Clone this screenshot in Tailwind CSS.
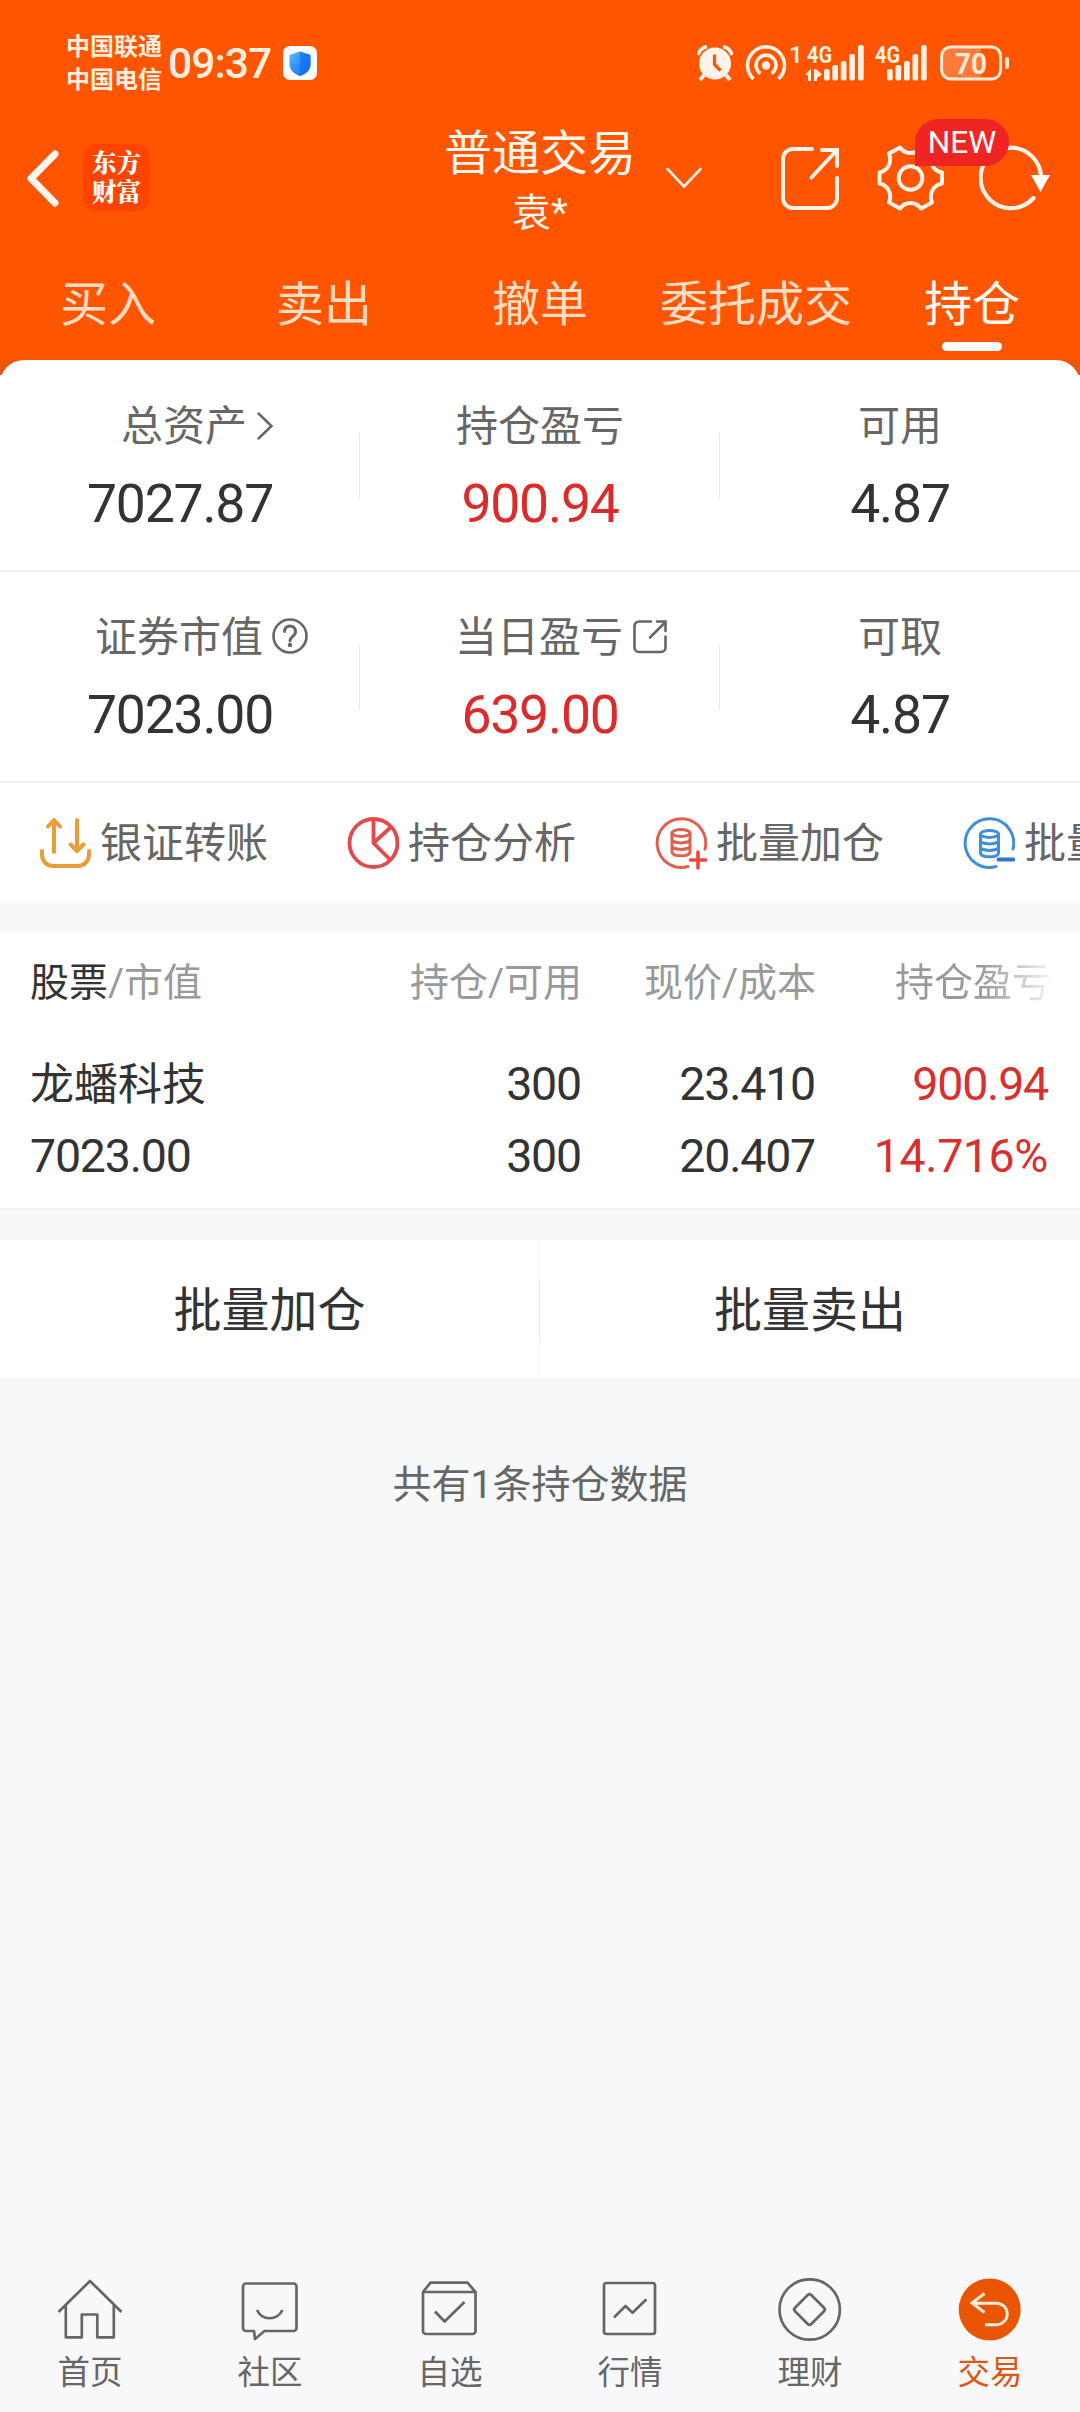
<!DOCTYPE html>
<html lang="zh-CN">
<head>
<meta charset="utf-8">
<title>普通交易</title>
<script src="https://cdn.jsdelivr.net/npm/@tailwindcss/browser@4"></script>
</head>
<body class="bg-[#f7f8fa]">
<div class="w-[1080px] h-[2412px] flex flex-col overflow-hidden bg-[#f7f8fa] font-['Roboto','Noto_Sans_CJK_SC',sans-serif] text-[#333] whitespace-nowrap">

  <header class="h-[360px] shrink-0 bg-[#ff5500] text-[#fff6ec] flex flex-col">
    <!-- status bar -->
    <div class="h-[112px] pt-[16px] pl-[66px] pr-[70px] flex items-center">
      <div class="flex flex-col text-[24px] leading-[33px] font-bold text-[#ffeedd]">
        <span>中国联通</span><span>中国电信</span>
      </div>
      <div class="ml-[6px] text-[42.5px] leading-[48px] font-medium tracking-[-0.9px] text-[#ffeedd]">09:37</div>
      <svg class="ml-[12px] -mt-[2px]" width="34" height="34" viewBox="0 0 34 34"><defs><linearGradient id="sh" x1="0" y1="0" x2="1" y2="1"><stop offset="0" stop-color="#5cb8ff"/><stop offset="1" stop-color="#0a63f0"/></linearGradient></defs><rect width="34" height="34" rx="7" fill="#fff"/><path d="M17 5.5 27.5 9v9.500c0 6-5 9.500-10.500 11.500C11.500 28 6.500 24.500 6.500 18.500V9Z" fill="url(#sh)"/><path d="M17 5.500 27.500 9v9.500c0 6-5 9.500-10.500 11.500Z" fill="#0a6cf5" opacity=".6"/></svg>
      <div class="flex-1"></div>
      <svg class="-mt-[2px]" width="36" height="36" viewBox="0 0 36 36" fill="#fff3ea"><circle cx="18" cy="18.500" r="16"/><path d="M1 10A12 12 0 0 1 10 1.500M26 1.500A12 12 0 0 1 35 10" fill="none" stroke="#fff3ea" stroke-width="3.500"/><path d="M7 30l-4 5M29 30l4 5" stroke="#fff3ea" stroke-width="4"/><path d="M17.500 9.500v10l6 6" fill="none" stroke="#ff5500" stroke-width="3.200"/></svg>
      <svg class="ml-[12px] -mt-[2px]" width="42" height="36" viewBox="0 0 42 36" fill="none" stroke="#fff0e2" stroke-width="3.600"><circle cx="21" cy="20.500" r="4.200" fill="#fff0e2" stroke="none"/><path d="M15.500 28.500a10 10 0 1 1 11 0"/><path d="M8.500 34a18.500 18.500 0 1 1 25 0"/></svg>
      <svg class="ml-[3px] -mt-[2px] overflow-visible" width="75" height="36" viewBox="0 0 75 36" fill="#fff0e2"><text x="-1" y="18" font-size="24" font-weight="600">1</text><text x="17" y="18" font-size="24.500" font-weight="700" textLength="25" lengthAdjust="spacingAndGlyphs">4G</text><path d="M15 29.500 21 24v12h-3v-5.500ZM32 29.500 26 24h-2v12h3v-3Z"/><rect x="34" y="24" width="5.700" height="11.500" rx="2"/><rect x="42.300" y="20" width="5.700" height="15.500" rx="2"/><rect x="50.800" y="16" width="5.700" height="19.500" rx="2"/><rect x="59.200" y="9" width="5.700" height="26.500" rx="2"/><rect x="68" y="0" width="5.700" height="35.500" rx="2"/></svg>
      <svg class="ml-[10px] -mt-[2px] overflow-visible" width="53" height="36" viewBox="0 0 53 36" fill="#fff0e2"><text x="0" y="18" font-size="24.500" font-weight="700" textLength="25" lengthAdjust="spacingAndGlyphs">4G</text><rect x="12" y="24" width="5.700" height="11.500" rx="2"/><rect x="20.500" y="20" width="5.700" height="15.500" rx="2"/><rect x="29" y="16" width="5.700" height="19.500" rx="2"/><rect x="37.500" y="9" width="5.700" height="26.500" rx="2"/><rect x="46" y="0" width="5.700" height="35.500" rx="2"/></svg>
      <svg class="ml-[12px] -mt-[2px] overflow-visible" width="70" height="36" viewBox="0 0 70 36"><path d="M10 3H41V33H10a7 7 0 0 1-7-7V10a7 7 0 0 1 7-7" fill="#ff7a38"/><rect x="1.600" y="2" width="59" height="32" rx="9" fill="none" stroke="#ffead6" stroke-width="3"/><rect x="65" y="12" width="4" height="12" rx="2" fill="#ffead6"/><text x="31" y="28.500" text-anchor="middle" font-size="30" font-weight="700" textLength="32" lengthAdjust="spacingAndGlyphs" fill="#ffead6">70</text></svg>
    </div>

    <!-- title bar -->
    <div class="h-[133px] flex items-start">
      <div class="w-[360px] flex items-center pt-[32px] pl-[26px]">
        <svg width="34" height="66" viewBox="0 0 34 66" fill="none" stroke="#fff8f0" stroke-width="7" stroke-linecap="round" stroke-linejoin="round"><path d="M29 9 5 33.500 29 58"/></svg>
        <div class="ml-[23px] w-[67px] h-[67px] rounded-[13px] bg-[#ff4400] text-white text-[24.500px] leading-[29px] font-black flex flex-col items-center justify-center pb-[3px] font-['Noto_Serif_CJK_SC','Noto_Sans_CJK_SC',serif]"><span>东方</span><span>财富</span></div>
      </div>
      <div class="relative w-[360px] flex flex-col items-center">
        <div class="mt-[13px] text-[48px] leading-[58px]">普通交易</div>
        <div class="mt-[3px] text-[39px] leading-[54px]">袁*</div>
        <svg class="absolute left-[305px] top-[54px]" width="38" height="24" viewBox="0 0 38 24" fill="none" stroke="#fff3ea" stroke-width="2.600" stroke-linecap="round"><path d="M2.500 3 19 20.500 35.500 3"/></svg>
      </div>
      <div class="relative w-[360px] flex items-center pt-[32px] pl-[60px]">
        <svg width="60" height="68" viewBox="0 0 60 68" fill="none" stroke="#fff3ea" stroke-width="4" stroke-linecap="round"><path d="M32 5H13a10 10 0 0 0-10 10V54a10 10 0 0 0 10 10H47a10 10 0 0 0 10-10V34"/><path d="M31.500 33.500 56 7M42 6H57V22"/></svg>
        <svg class="ml-[37px]" width="68" height="68" viewBox="0 0 68 68" fill="none" stroke="#fff3ea" stroke-width="4" stroke-linejoin="round"><path d="M23 3.500Q27 9 33.500 9T44 3.500L55 9.500C52 17 55 26.500 65 28.500V39.500C55 41.500 52 51 55 58.500L44 64.500Q40 59 33.500 59T23 64.500L12 58.500C15 51 12 41.500 2.500 39.500V28.500C12 26.500 15 17 12 9.500Z"/><circle cx="33.500" cy="34" r="11.800"/></svg>
        <svg class="ml-[34px]" width="74" height="68" viewBox="0 0 74 68" fill="none" stroke="#fff3ea" stroke-width="4.200" stroke-linecap="round"><path d="M32 3.600A30.300 30.300 0 0 1 62 34M54.500 54A30.300 30.300 0 1 1 32 3.600"/><path d="M52 31H71L61.500 48Z" fill="#fff" stroke="none"/></svg>
        <div class="absolute left-[195px] top-[7px] w-[94px] h-[47px] rounded-[24px] rounded-bl-none bg-[#f12424] text-white text-[31.500px] leading-[48px] text-center">NEW</div>
      </div>
    </div>

    <!-- tabs -->
    <nav class="flex-1 grid grid-cols-5 text-[48px] leading-[60px] text-center text-[#ffdcc2]">
      <div class="pt-[30px]">买入</div>
      <div class="pt-[30px]">卖出</div>
      <div class="pt-[30px]">撤单</div>
      <div class="pt-[30px]">委托成交</div>
      <div class="pt-[30px] flex flex-col items-center text-[#fffaf2]">持仓<div class="mt-[7px] w-[60px] h-[9px] rounded-full bg-white"></div></div>
    </nav>
  </header>

  <!-- assets -->
  <div class="bg-linear-to-b from-[#e9560a] from-[15px] to-[#f7f8fa] to-[15px]">
  <section class="bg-white rounded-t-[24px] overflow-hidden">
    <div class="h-[212px] border-b-2 border-[#f0f0f0] grid grid-cols-3">
      <div class="relative flex flex-col items-center pt-[42px]">
        <div class="flex items-center pl-[8px] text-[42px] leading-[50px] text-[#666]">总资产<svg class="ml-[9px] -mr-[27px] -mt-[3px]" width="18" height="30" viewBox="0 0 18 30" fill="none" stroke="#666" stroke-width="2.500" stroke-linecap="round"><path d="M2.500 2.500 15.500 15 2.500 27.500"/></svg></div>
        <div class="mt-[22px] text-[53.500px] leading-[60px] tracking-[-1.2px]">7027.87</div>
        <div class="absolute right-0 top-[73px] w-px h-[66px] bg-[#e8e8e8]"></div>
      </div>
      <div class="relative flex flex-col items-center pt-[42px]">
        <div class="text-[42px] leading-[50px] text-[#666]">持仓盈亏</div>
        <div class="mt-[22px] text-[53.500px] leading-[60px] tracking-[-1.2px] text-[#dc2b2b]">900.94</div>
        <div class="absolute right-0 top-[73px] w-px h-[66px] bg-[#e8e8e8]"></div>
      </div>
      <div class="flex flex-col items-center pt-[42px]">
        <div class="text-[42px] leading-[50px] text-[#666]">可用</div>
        <div class="mt-[22px] text-[53.500px] leading-[60px] tracking-[-1.2px]">4.87</div>
      </div>
    </div>
    <div class="h-[211px] border-b-2 border-[#f0f0f0] grid grid-cols-3">
      <div class="relative flex flex-col items-center pt-[41px]">
        <div class="flex items-center -ml-[2px] text-[42px] leading-[50px] text-[#666]">证券市值<svg class="ml-[9px] -mr-[45px] -mt-[4px]" width="36" height="36" viewBox="0 0 36 36" fill="none" stroke="#666" stroke-width="2.600" stroke-linecap="round"><circle cx="18" cy="18" r="16.500"/><path stroke-width="3" d="M12.500 13.500a5.500 5.500 0 1 1 9 4.200c-2 1.600-3.500 2.500-3.500 5"/><circle cx="18" cy="27" r="2.200" fill="#666" stroke="none"/></svg></div>
        <div class="mt-[22px] text-[53.500px] leading-[60px] tracking-[-1.2px]">7023.00</div>
        <div class="absolute right-0 top-[72px] w-px h-[66px] bg-[#e8e8e8]"></div>
      </div>
      <div class="relative flex flex-col items-center pt-[41px]">
        <div class="flex items-center -ml-[2px] text-[42px] leading-[50px] text-[#666]">当日盈亏<svg class="ml-[9px] -mr-[45px] -mt-[3px]" width="36" height="36" viewBox="0 0 36 36" fill="none" stroke="#666" stroke-width="2.600" stroke-linecap="round"><path d="M19 2.500H7A4.500 4.500 0 0 0 2.500 7V28.500A4.500 4.500 0 0 0 7 33H29A4.500 4.500 0 0 0 33.500 28.500V17.500"/><path d="M18 18.500 33 3.500M25 2.500H33.500V12"/></svg></div>
        <div class="mt-[22px] text-[53.500px] leading-[60px] tracking-[-1.2px] text-[#dc2b2b]">639.00</div>
        <div class="absolute right-0 top-[72px] w-px h-[66px] bg-[#e8e8e8]"></div>
      </div>
      <div class="flex flex-col items-center pt-[41px]">
        <div class="text-[42px] leading-[50px] text-[#666]">可取</div>
        <div class="mt-[22px] text-[53.500px] leading-[60px] tracking-[-1.2px]">4.87</div>
      </div>
    </div>

    <!-- shortcuts -->
    <div class="h-[120px] pl-[39px] flex gap-[79px] text-[42px] leading-[50px] text-[#666] overflow-hidden">
      <div class="flex items-center shrink-0 gap-[9px] pt-[2px]"><svg class="-mt-[3px]" width="52" height="54" viewBox="0 0 52 54" fill="none" stroke="#e99c3a" stroke-width="4" stroke-linecap="round" stroke-linejoin="round"><path d="M3 35V39A11 11 0 0 0 14 50H39A11 11 0 0 0 50 39V35"/><path d="M15 36V4M9 10.500 15 4 21 10.500M38 4V35M31.500 28.500 38 35 44.500 28.500"/></svg>银证转账</div>
      <div class="flex items-center shrink-0 gap-[9px] pt-[2px]"><svg class="-mt-[3px]" width="52" height="54" viewBox="0 0 52 54" fill="none" stroke="#e14a4a" stroke-width="3.800"><circle cx="26.500" cy="27" r="24"/><path d="M26.500 3V27L44 44.500M26.500 27 44 11"/></svg>持仓分析</div>
      <div class="flex items-center shrink-0 gap-[9px] pt-[2px]"><svg class="-mt-[3px]" width="52" height="54" viewBox="0 0 52 54" fill="none" stroke="#e0604e" stroke-width="3" stroke-linecap="round"><path d="M50 33A24.300 24.300 0 1 0 33 50.500"/><ellipse cx="26" cy="17" rx="9" ry="3.500"/><path d="M17 17V36C17 41 35 41 35 36V17M17 23.500C17 28 35 28 35 23.500M17 30C17 34.500 35 34.500 35 30"/><path stroke="#e8493a" stroke-width="3.600" d="M35.500 44H50.500M43 36V52"/></svg>批量加仓</div>
      <div class="flex items-center shrink-0 gap-[9px] pt-[2px]"><svg class="-mt-[3px]" width="52" height="54" viewBox="0 0 52 54" fill="none" stroke="#3f8fd8" stroke-width="3" stroke-linecap="round"><path d="M50 33A24.300 24.300 0 1 0 33 50.500"/><ellipse cx="26.500" cy="18" rx="9" ry="3.500"/><path d="M17.500 18V37C17.500 42 35.500 42 35.500 37V18M17.500 24.500C17.500 29 35.500 29 35.500 24.500M17.500 31C17.500 35.500 35.500 35.500 35.500 31"/><path stroke="#3178c8" stroke-width="3.800" d="M35.500 43.500H50.500"/></svg>批量卖出</div>
    </div>
  </section>
  </div>

  <!-- holdings -->
  <section class="mt-[30px] h-[277px] bg-white border-b-2 border-[#eff0f3] pl-[30px]">
    <div class="h-[98px] pt-px flex items-center text-[39px] leading-[50px] text-[#999]">
      <div class="w-[290px]"><span class="text-[#333]">股票</span>/市值</div>
      <div class="w-[262px] text-right">持仓/可用</div>
      <div class="w-[234px] text-right">现价/成本</div>
      <div class="w-[235px] text-right bg-linear-to-r from-[#999] from-70% to-[#f4f4f4] bg-clip-text text-transparent">持仓盈亏</div>
    </div>
    <div class="mt-[16px] h-[72px] pt-[2px] flex items-center text-[46.500px] leading-[60px] tracking-[-1.2px]">
      <div class="w-[290px] pt-px text-[44px] tracking-normal">龙蟠科技</div>
      <div class="w-[261px] text-right">300</div>
      <div class="w-[234px] text-right">23.410</div>
      <div class="w-[233px] text-right text-[#d92f2f]">900.94</div>
    </div>
    <div class="h-[72px] pt-[2px] flex items-center text-[46.500px] leading-[60px] tracking-[-1.2px]">
      <div class="w-[290px]">7023.00</div>
      <div class="w-[261px] text-right">300</div>
      <div class="w-[234px] text-right">20.407</div>
      <div class="w-[233px] text-right tracking-[-0.4px] text-[#d92f2f]">14.716%</div>
    </div>
  </section>

  <!-- batch actions -->
  <section class="mt-[30px] h-[138px] bg-white flex items-center text-[48px] leading-[60px] text-center">
    <div class="w-[539px] pt-[3px]">批量加仓</div>
    <div class="w-px h-full bg-[#f5f6f8] flex items-center"><div class="w-px h-[60px] bg-[#e8e8ea]"></div></div>
    <div class="w-[540px] pt-[3px]">批量卖出</div>
  </section>
  <div class="mt-[82px] text-center text-[39px] leading-[50px] text-[#666]">共有1条持仓数据</div>

  <!-- bottom navigation -->
  <nav class="mt-auto h-[146px] pt-[12px] bg-[#f8f8fa] grid grid-cols-6 text-[32.500px] leading-[40px] text-[#666]">
    <div class="flex flex-col items-center gap-[11px]"><svg width="64" height="64" viewBox="0 0 64 64" fill="none" stroke="#666" stroke-width="2.700"><path d="M.500 34 32 3 63.500 34M7.800 27.500V59.300H23.800V36.500H39.300V59.300H55.800V27.500" stroke-linejoin="round"/></svg>首页</div>
    <div class="flex flex-col items-center gap-[11px]"><svg width="64" height="64" viewBox="0 0 64 64" fill="none" stroke="#666" stroke-width="2.700" stroke-linejoin="round"><path d="M8 5.500H55.500A3 3 0 0 1 58.500 8.500V50A3 3 0 0 1 55.500 53H26.500L17 61 16 53H8A3 3 0 0 1 5 50V8.500A3 3 0 0 1 8 5.500Z"/><path d="M19 32C24 43 39 43 44.500 32"/></svg>社区</div>
    <div class="flex flex-col items-center gap-[11px]"><svg width="64" height="64" viewBox="0 0 64 64" fill="none" stroke="#666" stroke-width="2.700" stroke-linejoin="round"><path d="M5 14 12.500 4.700H49.500L57.500 14V53A3 3 0 0 1 54.500 56H8A3 3 0 0 1 5 53ZM5 14H57.500"/><path d="M17 33.500 26.600 43.500 46.500 24"/></svg>自选</div>
    <div class="flex flex-col items-center gap-[11px]"><svg width="64" height="64" viewBox="0 0 64 64" fill="none" stroke="#666" stroke-width="2.700" stroke-linejoin="round"><rect x="6" y="5" width="51" height="51" rx="2.500"/><path d="M16 39.500 27.500 28 34.500 34.700 48.500 21.300"/></svg>行情</div>
    <div class="flex flex-col items-center gap-[11px]"><svg width="64" height="64" viewBox="0 0 64 64" fill="none" stroke="#666" stroke-width="2.700"><circle cx="31.700" cy="31.500" r="30.200"/><rect x="20" y="20" width="23" height="23" rx="2.500" transform="rotate(45 31.500 31.500)"/></svg>理财</div>
    <div class="flex flex-col items-center gap-[11px] text-[#d95a14]"><svg width="64" height="64" viewBox="0 0 64 64" fill="none" stroke="#ffeedd" stroke-width="2.900"><circle cx="31.700" cy="31.500" r="31" fill="#ea5504" stroke="none"/><path d="M26.500 15.500 14 25 26.500 34.500M14 25.200H38.500A10.700 10.700 0 0 1 38.500 46.700H27"/></svg>交易</div>
  </nav>
</div>
</body>
</html>
